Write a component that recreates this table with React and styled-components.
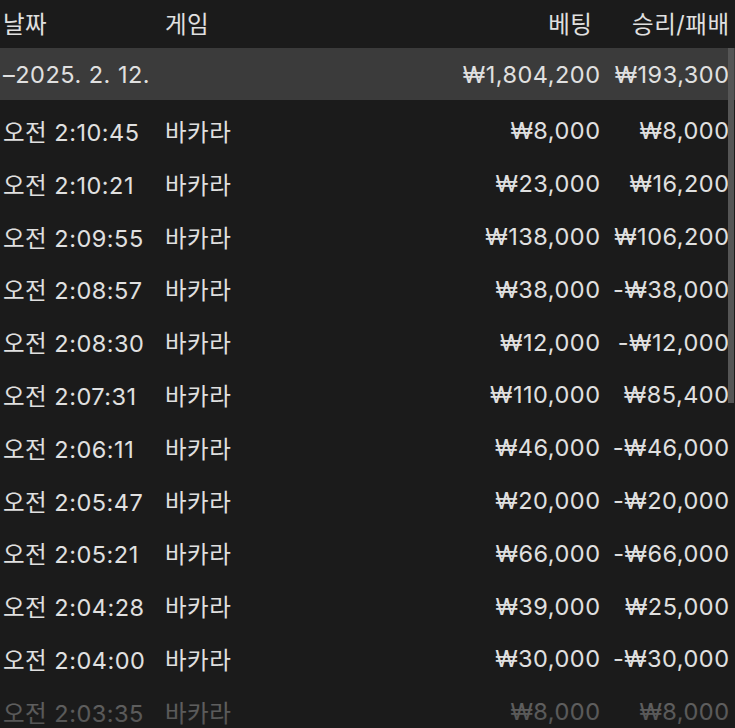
import styled, { createGlobalStyle } from "styled-components";

const GlobalStyle = createGlobalStyle`
  html, body {
    margin: 0;
    padding: 0;
    background: #1b1b1b;
  }
  body {
    font-family: Inter, "Noto Sans CJK KR", sans-serif;
    -webkit-font-smoothing: antialiased;
  }
`;

const Screen = styled.div`
  position: relative;
  width: 735px;
  height: 728px;
  overflow: hidden;
  background: #1b1b1b;
  color: #e0e0e0;
  font-size: 23.5px;
  font-weight: 400;
  letter-spacing: 0.5px;
`;

const Row = styled.div`
  display: grid;
  grid-template-columns: 162px 1fr 160px 129px;
  align-items: center;
  height: ${(p) => p.$height || 52.8}px;
  padding: 0 6px 0 3px;
  background: ${(p) => (p.$group ? "#3b3b3b" : "transparent")};
`;

const Cell = styled.span`
  white-space: nowrap;
  text-align: ${(p) => (p.$right ? "right" : "left")};
  padding-right: ${(p) => p.$inset || 0}px;
  margin-right: ${(p) => (p.$right ? -0.5 : 0)}px;
`;

const HeaderRow = styled(Row)`
  padding-bottom: 3px;
  box-sizing: border-box;
`;

const Body = styled.div`
  padding-top: 4.6px;
`;

const Scrollbar = styled.div`
  position: absolute;
  right: 1px;
  top: 48px;
  width: 6px;
  height: 355px;
  background: #555;
`;

const Fade = styled.div`
  position: absolute;
  left: 0;
  right: 0;
  bottom: 0;
  height: 44px;
  background: linear-gradient(to bottom, rgba(27, 27, 27, 0.6), rgba(27, 27, 27, 0.72));
  pointer-events: none;
`;

const rows = [
  ["오전 2:10:45", "₩8,000", "₩8,000"],
  ["오전 2:10:21", "₩23,000", "₩16,200"],
  ["오전 2:09:55", "₩138,000", "₩106,200"],
  ["오전 2:08:57", "₩38,000", "-₩38,000"],
  ["오전 2:08:30", "₩12,000", "-₩12,000"],
  ["오전 2:07:31", "₩110,000", "₩85,400"],
  ["오전 2:06:11", "₩46,000", "-₩46,000"],
  ["오전 2:05:47", "₩20,000", "-₩20,000"],
  ["오전 2:05:21", "₩66,000", "-₩66,000"],
  ["오전 2:04:28", "₩39,000", "₩25,000"],
  ["오전 2:04:00", "₩30,000", "-₩30,000"],
  ["오전 2:03:35", "₩8,000", "₩8,000"],
];

export default function App() {
  return (
    <>
      <GlobalStyle />
      <Screen>
        <HeaderRow $height={48}>
          <Cell>날짜</Cell>
          <Cell>게임</Cell>
          <Cell $right $inset={8}>베팅</Cell>
          <Cell $right>승리/패배</Cell>
        </HeaderRow>
        <Row $group $height={52}>
          <Cell>–2025. 2. 12.</Cell>
          <Cell />
          <Cell $right>₩1,804,200</Cell>
          <Cell $right>₩193,300</Cell>
        </Row>
        <Body>
          {rows.map(([time, bet, result]) => (
            <Row key={time}>
              <Cell>{time}</Cell>
              <Cell>바카라</Cell>
              <Cell $right>{bet}</Cell>
              <Cell $right>{result}</Cell>
            </Row>
          ))}
        </Body>
        <Scrollbar />
        <Fade />
      </Screen>
    </>
  );
}
